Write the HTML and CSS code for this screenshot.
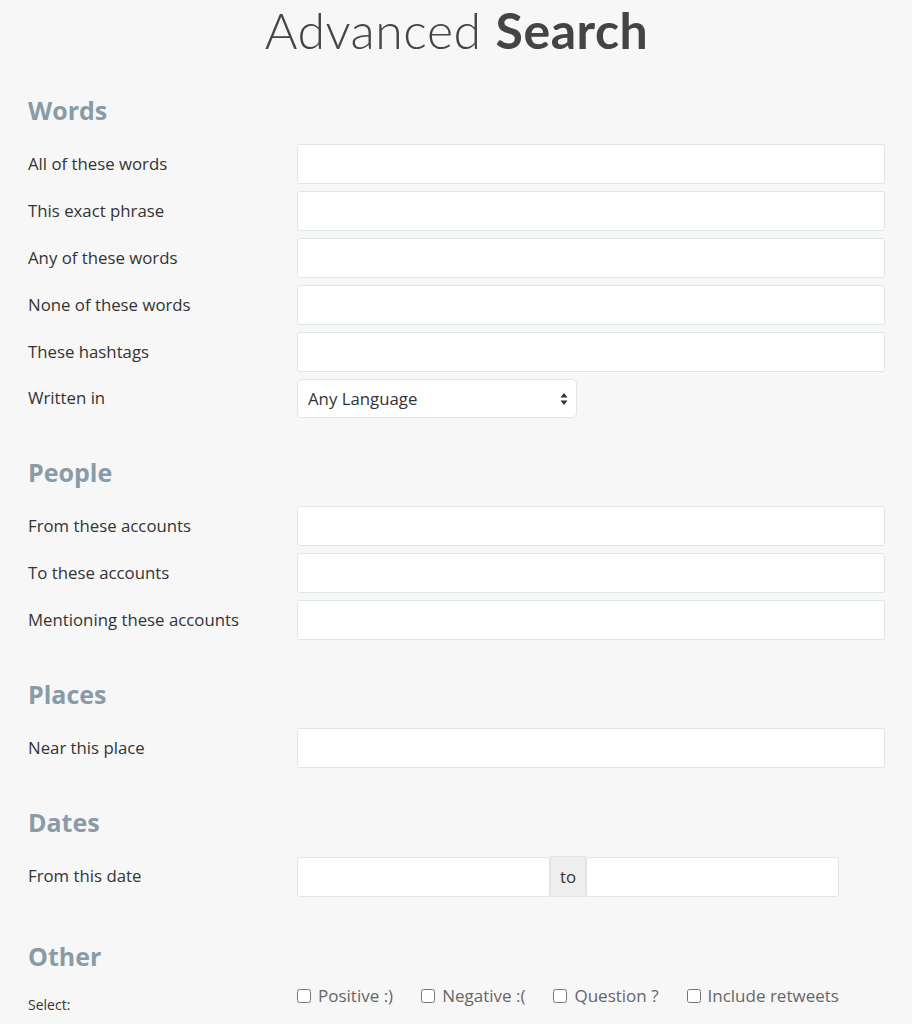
FILE: index.html
```html
<!DOCTYPE html>
<html lang="en">
<head>
  <meta charset="UTF-8">
  <meta name="viewport" content="width=device-width, initial-scale=1.0">
  <title>Advanced Search</title>
  <link rel="stylesheet" href="styles.css">
</head>
<body>

  <div class="search-container">
    <h1 class="page-title">Advanced <strong>Search</strong></h1>

    <form id="advancedSearch">
      <!-- Words -->
      <h2 class="section-title">Words</h2>
      <div class="form-row">
        <label for="allWords">All of these words</label>
        <input type="text" id="allWords" name="allWords" />
      </div>
      <div class="form-row">
        <label for="exactPhrase">This exact phrase</label>
        <input type="text" id="exactPhrase" name="exactPhrase" />
      </div>
      <div class="form-row">
        <label for="anyWords">Any of these words</label>
        <input type="text" id="anyWords" name="anyWords" />
      </div>
      <div class="form-row">
        <label for="noneWords">None of these words</label>
        <input type="text" id="noneWords" name="noneWords" />
      </div>
      <div class="form-row">
        <label for="hashtags">These hashtags</label>
        <input type="text" id="hashtags" name="hashtags" />
      </div>
      <div class="form-row">
        <label for="language">Written in</label>
        <div class="select-wrap">
          <select id="language" name="language">
            <option>Any Language</option>
            <option>English</option>
            <option>French</option>
            <option>German</option>
            <option>Spanish</option>
          </select>
          <svg class="select-arrows" width="8" height="14" viewBox="0 0 8 14">
            <path d="M4 1 L7.5 5.5 H0.5 Z M4 13 L7.5 8.5 H0.5 Z" fill="#333" />
          </svg>
        </div>
      </div>

      <!-- People -->
      <h2 class="section-title">People</h2>
      <div class="form-row">
        <label for="fromAccounts">From these accounts</label>
        <input type="text" id="fromAccounts" name="fromAccounts" />
      </div>
      <div class="form-row">
        <label for="toAccounts">To these accounts</label>
        <input type="text" id="toAccounts" name="toAccounts" />
      </div>
      <div class="form-row">
        <label for="mentioning">Mentioning these accounts</label>
        <input type="text" id="mentioning" name="mentioning" />
      </div>

      <!-- Places -->
      <h2 class="section-title">Places</h2>
      <div class="form-row">
        <label for="nearPlace">Near this place</label>
        <input type="text" id="nearPlace" name="nearPlace" />
      </div>

      <!-- Dates -->
      <h2 class="section-title">Dates</h2>
      <div class="form-row">
        <label for="dateFrom">From this date</label>
        <div class="date-range">
          <input type="text" id="dateFrom" name="dateFrom" />
          <span class="range-addon">to</span>
          <input type="text" id="dateTo" name="dateTo" />
        </div>
      </div>

      <!-- Other -->
      <h2 class="section-title other-title">Other</h2>
      <div class="form-row checks-row">
        <span class="small-label">Select:</span>
        <div class="check-group">
          <label class="check"><input type="checkbox" name="positive" /> Positive :)</label>
          <label class="check"><input type="checkbox" name="negative" /> Negative :(</label>
          <label class="check"><input type="checkbox" name="question" /> Question ?</label>
          <label class="check"><input type="checkbox" name="retweets" /> Include retweets</label>
        </div>
      </div>
    </form>
  </div>

</body>
</html>
```

FILE: styles.css
```css
body {
  font-family: "Open Sans", Lato, sans-serif;
  background-color: #f7f7f7;
  color: #333;
  margin: 0;
}

.search-container {
  padding: 0 27px 0 28px;
}

.page-title {
  text-align: center;
  font-family: Lato, sans-serif;
  font-size: 50px;
  font-weight: 300;
  line-height: 60px;
  margin: 0 0 35px 0;
  color: #444;
  letter-spacing: 0.5px;
}

.page-title strong {
  font-weight: 700;
}

.section-title {
  font-size: 25px;
  font-weight: 700;
  line-height: 30px;
  color: #8a9ba8;
  margin: 0 0 19px 0;
}

.form-row + .section-title {
  margin-top: 39px;
}

.form-row + .other-title {
  margin-top: 44px;
  margin-bottom: 12px;
}

.form-row {
  display: grid;
  grid-template-columns: 269px 1fr;
  align-items: center;
  margin-bottom: 7px;
}

.form-row label {
  font-size: 16.8px;
  color: #333;
  padding-bottom: 2px;
}

input[type="text"],
select {
  height: 40px;
  width: 100%;
  box-sizing: border-box;
  border: 1px solid #dfe6ea;
  border-radius: 3px;
  background-color: white;
  padding: 6px 10px;
  font-family: inherit;
  font-size: 16.8px;
  color: #333;
}

.select-wrap {
  position: relative;
  width: 280px;
}

select {
  -webkit-appearance: none;
  appearance: none;
  height: 39px;
  border-radius: 5px;
  padding-left: 10px;
}

.select-arrows {
  position: absolute;
  right: 9px;
  top: 13px;
  pointer-events: none;
}

.date-range {
  display: flex;
  align-items: center;
  width: 542px;
}

.date-range input[type="text"] {
  flex: 1;
  border-radius: 3px;
}

.range-addon {
  width: 36px;
  height: 41px;
  box-sizing: border-box;
  display: flex;
  align-items: center;
  justify-content: center;
  background-color: #eeeeee;
  border: 1px solid #dfe6ea;
  font-size: 16.8px;
  color: #333;
}

.checks-row {
  align-items: start;
}

.small-label {
  font-size: 14px;
  color: #333;
  padding-top: 12px;
}

.check-group {
  display: flex;
  padding-top: 1px;
}

.form-row .check {
  font-size: 17px;
  color: #666;
  display: flex;
  align-items: center;
  gap: 7px;
  margin-right: 28px;
  padding-bottom: 0;
}

.check input {
  margin: 0;
  width: 14px;
  height: 14px;
}
```
